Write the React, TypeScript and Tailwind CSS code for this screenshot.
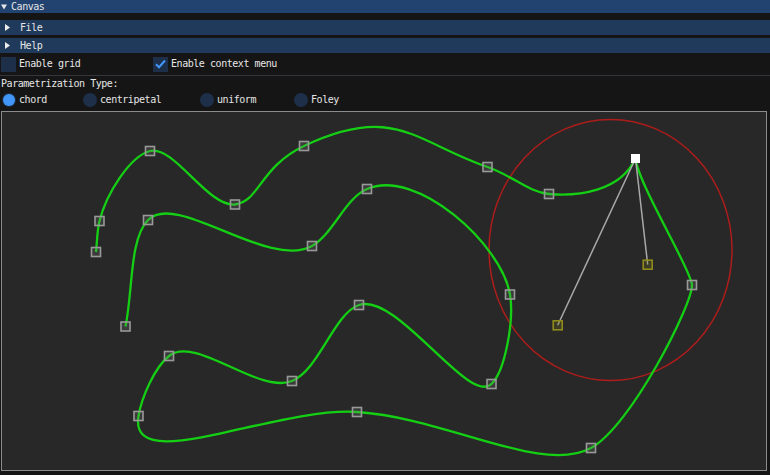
import { useMemo } from "react";

type Pt = [number, number];

// spline control points, in page coordinates
const points: Pt[] = [
  [96, 252], [99.5, 221], [150, 151], [235, 204.5], [304, 146], [487.5, 167], [549, 194],
  [635.5, 158.5], [692, 285], [591, 448], [357, 412], [138.5, 416], [169, 356], [292, 381],
  [359, 305], [491.5, 384], [510, 294.5], [367, 189], [312, 246], [148, 220], [125.5, 326.5],
];
// per-point tangent strength, tuned by eye
const tension: Record<number, number> = { 4: 1.75, 5: 1.25, 8: 0.35, 9: 0.85, 10: 1.15, 11: 1.25, 17: 1.15 };
const SELECTED = 7;
const handleIn: Pt = [557.7, 325.3];
const handleOut: Pt = [647.7, 264.7];

const dist = (a: Pt, b: Pt) => Math.hypot(b[0] - a[0], b[1] - a[1]);

function buildPath(pts: Pt[], alpha: number) {
  const n = pts.length;
  const get = (i: number): Pt => {
    if (i < 0) return [2 * pts[0][0] - pts[1][0], 2 * pts[0][1] - pts[1][1]];
    if (i >= n) return [2 * pts[n - 1][0] - pts[n - 2][0], 2 * pts[n - 1][1] - pts[n - 2][1]];
    return pts[i];
  };
  let d = `M${pts[0][0]},${pts[0][1]}`;
  for (let i = 0; i < n - 1; i++) {
    const p0 = get(i - 1), p1 = get(i), p2 = get(i + 1), p3 = get(i + 2);
    const d1 = Math.pow(dist(p0, p1), alpha);
    const d2 = Math.pow(dist(p1, p2), alpha);
    const d3 = Math.pow(dist(p2, p3), alpha);
    const s1 = tension[i] ?? 1;
    const s2 = tension[i + 1] ?? 1;
    const m1 = [0, 1].map((k) => d2 * ((p1[k] - p0[k]) / d1 - (p2[k] - p0[k]) / (d1 + d2) + (p2[k] - p1[k]) / d2));
    const m2 = [0, 1].map((k) => d2 * ((p2[k] - p1[k]) / d2 - (p3[k] - p1[k]) / (d2 + d3) + (p3[k] - p2[k]) / d3));
    let b1: Pt = [p1[0] + (m1[0] * s1) / 3, p1[1] + (m1[1] * s1) / 3];
    let b2: Pt = [p2[0] - (m2[0] * s2) / 3, p2[1] - (m2[1] * s2) / 3];
    // the selected point has its own in/out tangents
    if (i === SELECTED) b1 = [p1[0] + (handleOut[0] - p1[0]) * 0.25, p1[1] + (handleOut[1] - p1[1]) * 0.25];
    if (i + 1 === SELECTED) b2 = [p2[0] + (handleIn[0] - p2[0]) * 0.2, p2[1] + (handleIn[1] - p2[1]) * 0.2];
    d += ` C${b1[0].toFixed(2)},${b1[1].toFixed(2)} ${b2[0].toFixed(2)},${b2[1].toFixed(2)} ${p2[0]},${p2[1]}`;
  }
  return d;
}

function Header({ label }: { label: string }) {
  return (
    <div className="h-[15px] bg-[#1f3a5a] flex items-center">
      <svg className="ml-[5px]" width="5" height="7" viewBox="0 0 5 7">
        <path d="M0 0L5 3.5L0 7Z" fill="#ececec" />
      </svg>
      <span className="ml-[10px]">{label}</span>
    </div>
  );
}

function Checkbox({ label, checked }: { label: string; checked?: boolean }) {
  return (
    <div className="flex items-center">
      <div className="w-[15px] h-[15px] bg-[#1d2f49] flex items-center justify-center">
        {checked && (
          <svg width="11" height="10" viewBox="0 0 11 10">
            <path d="M1 5.2L4 8.2L10 1.5" fill="none" stroke="#4296fa" strokeWidth="2" />
          </svg>
        )}
      </div>
      <span className="ml-[3px]">{label}</span>
    </div>
  );
}

function Radio({ label, active, className }: { label: string; active?: boolean; className: string }) {
  return (
    <div className={`flex items-center ${className}`}>
      <div className="w-[14px] h-[14px] rounded-full bg-[#1d2f49] flex items-center justify-center">
        {active && <div className="w-[12px] h-[12px] rounded-full bg-[#4296fa]" />}
      </div>
      <span className="ml-[3px]">{label}</span>
    </div>
  );
}

function SplineCanvas() {
  const path = useMemo(() => buildPath(points, 1), []);
  const sel = points[SELECTED];
  return (
    <svg width="764" height="358" viewBox="2 112 764 358" className="block">
      <ellipse cx="610.5" cy="250" rx="121.5" ry="130.5" fill="none" stroke="#ad1d1b" strokeWidth="1.5" />
      <path d={path} fill="none" stroke="#14cf14" strokeWidth="2.3" strokeLinejoin="round" />
      <line x1={sel[0]} y1={sel[1]} x2={handleIn[0]} y2={handleIn[1]} stroke="#a9a9a9" strokeWidth="1.5" />
      <line x1={sel[0]} y1={sel[1]} x2={handleOut[0]} y2={handleOut[1]} stroke="#a9a9a9" strokeWidth="1.5" />
      {[handleIn, handleOut].map(([x, y], i) => (
        <rect key={i} x={x - 4.5} y={y - 4.5} width="9" height="9" fill="rgba(120,115,20,0.25)" stroke="#8f8a1c" strokeWidth="1.6" />
      ))}
      {points.map(([x, y], i) =>
        i === SELECTED ? (
          <rect key={i} x={x - 4.5} y={y - 4.5} width="9" height="9" fill="#ffffff" />
        ) : (
          <rect key={i} x={x - 4.5} y={y - 4.5} width="9" height="9" fill="rgba(128,128,128,0.22)" stroke="#999999" strokeWidth="1.6" />
        )
      )}
    </svg>
  );
}

export default function App() {
  return (
    <div className="w-[770px] h-[475px] bg-[#151515] text-[#e6e6e6] text-[10px] leading-none tracking-[-0.45px] font-['DejaVu_Sans_Mono',monospace] overflow-hidden flex flex-col">
      <div className="h-[13px] bg-[#22426f] flex items-center">
        <svg className="ml-[1px]" width="6" height="6" viewBox="0 0 6 6">
          <path d="M0 0.5H6L3 5.5Z" fill="#e6e6e6" />
        </svg>
        <span className="ml-[4px]">Canvas</span>
      </div>

      <div className="mt-[7px]">
        <Header label="File" />
      </div>
      <div className="mt-[3px]">
        <Header label="Help" />
      </div>

      <div className="mt-[3px] h-[16px] flex items-center pl-[1px]">
        <div className="w-[152px]">
          <Checkbox label="Enable grid" />
        </div>
        <Checkbox label="Enable context menu" checked />
      </div>

      <div className="mt-[3px] h-px bg-[#34343a]" />

      <div className="h-[15px] flex items-center pl-[1px]">Parametrization Type:</div>

      <div className="mt-[1px] h-[15px] flex items-center pl-[2px]">
        <Radio className="w-[81px]" label="chord" active />
        <Radio className="w-[117px]" label="centripetal" />
        <Radio className="w-[94px]" label="uniform" />
        <Radio className="" label="Foley" />
      </div>

      <div className="mt-[4px] ml-[1px] w-[766px] h-[360px] border border-[#8c8c8c] bg-[#282828]">
        <SplineCanvas />
      </div>
    </div>
  );
}
